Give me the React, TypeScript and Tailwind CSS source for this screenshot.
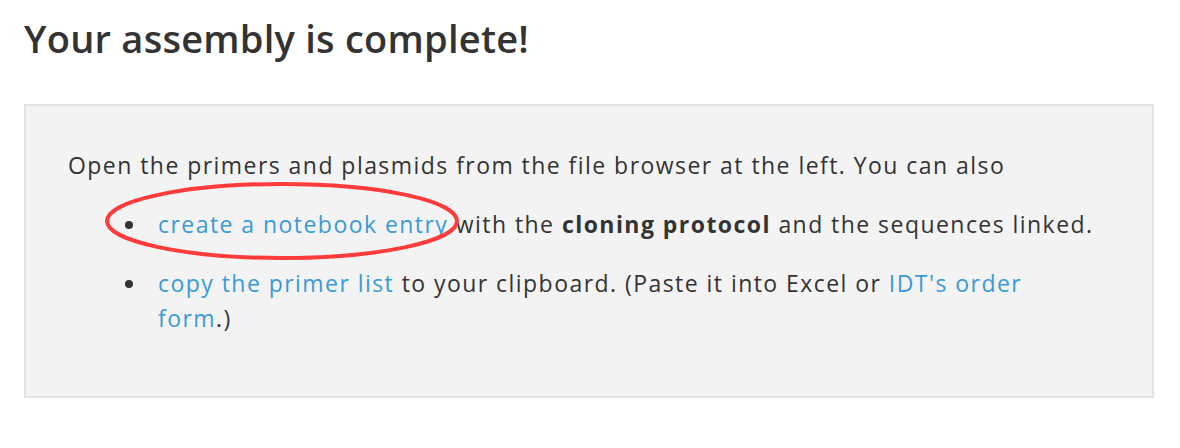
const FONT = "font-['Open_Sans','Lato',sans-serif]";

function Circled() {
  // hand-drawn red annotation around the first link
  return (
    <svg
      className="pointer-events-none absolute left-[104px] top-[181px]"
      width="356"
      height="80"
      viewBox="0 0 356 80"
      fill="none"
    >
      <ellipse cx="178" cy="40" rx="175" ry="37" stroke="#ff3b3b" strokeWidth="4" />
    </svg>
  );
}

export default function App() {
  return (
    <div className={`relative min-h-screen bg-white text-[#333] ${FONT}`}>
      <div className="px-[24px] pt-[14px]">
        <h1 className="text-[38px] font-semibold leading-[48px] tracking-[0.25px]">Your assembly is complete!</h1>
        <div className="mt-[42px] h-[294px] w-[1130px] border-2 border-[#e2e2e2] bg-[#f3f3f3] pl-[42px] pt-[42px] text-[23px] leading-[35px] tracking-[1.45px]">
          <p>Open the primers and plasmids from the file browser at the left. You can also</p>
          <ul className="mt-[24px] flex list-disc flex-col gap-[24px] pl-[80px] marker:text-[#333]">
            <li className="pl-[10px]">
              <a className="text-[#3a9ad9]">create a notebook entry</a> with the <b className="font-bold">cloning protocol</b> and the sequences linked.
            </li>
            <li className="pl-[10px]">
              <a className="text-[#3a9ad9]">copy the primer list</a> to your clipboard. (Paste it into Excel or <a className="text-[#3a9ad9]">IDT's order</a>
              <br />
              <a className="text-[#3a9ad9]">form</a>.)
            </li>
          </ul>
        </div>
      </div>
      <Circled />
    </div>
  );
}
